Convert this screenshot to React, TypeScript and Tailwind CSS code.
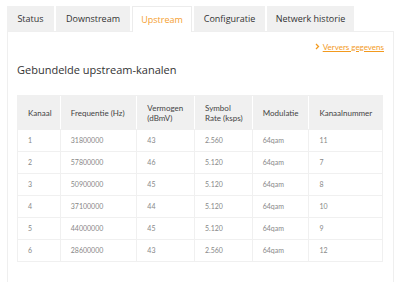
import React from "react";

const tabs = ["Status", "Downstream", "Upstream", "Configuratie", "Netwerk historie"];
const widths = ["w-[47px]", "w-[74px]", "w-[60px]", "w-[71px]", "w-[87px]"];

const rows = [
  ["1", "31800000", "43", "2.560", "64qam", "11"],
  ["2", "57800000", "46", "5.120", "64qam", "7"],
  ["3", "50900000", "45", "5.120", "64qam", "8"],
  ["4", "37100000", "44", "5.120", "64qam", "10"],
  ["5", "44000000", "45", "5.120", "64qam", "9"],
  ["6", "28600000", "43", "2.560", "64qam", "12"],
];

const colW = ["w-[43px]", "w-[77px]", "w-[58px]", "w-[58px]", "w-[57px]", "w-[73px]"];

export default function App() {
  return (
    <div className="w-[400px] h-[282px] bg-white overflow-hidden pt-[6px] pl-[7px]" style={{ fontFamily: "'Open Sans', sans-serif" }}>
      <div className="flex gap-[2px] h-[25px]">
        {tabs.map((t, i) => (
          <div
            key={t}
            className={
              "flex items-center justify-center text-[9px] " +
              widths[i] +
              (i === 2
                ? " bg-white text-[#f5a030] border border-[#ececec] border-b-0 relative z-10 h-[26px]"
                : " bg-[#f0f0f0] text-[#333]")
            }
          >
            {t}
          </div>
        ))}
      </div>
      <div className="w-[387px] h-[260px] border border-[#efefef] bg-white" style={{ fontFamily: "Lato, sans-serif" }}>
        <div className="flex justify-end pr-[9px] pt-[7px] h-[22px]">
          <span className="text-[#f39a1e] text-[8px] flex items-center gap-[3px]">
            <svg width="5" height="7" viewBox="0 0 5 7">
              <path d="M1 1 L3.5 3.5 L1 6" stroke="#f39a1e" strokeWidth="1.3" fill="none" />
            </svg>
            <span className="underline">Ververs gegevens</span>
          </span>
        </div>
        <div className="pl-[9px] pt-[8px] text-[11px] text-[#333] h-[41px]" style={{ fontFamily: "'Open Sans', sans-serif" }}>
          Gebundelde upstream-kanalen
        </div>
        <div className="ml-[9px] w-[366px] border border-[#f0f0f0]">
          <div className="flex bg-[#f0f0f0] h-[33px] text-[8px] text-[#444] leading-[10px]">
            {[
              "Kanaal",
              "Frequentie (Hz)",
              <>Vermogen<br />(dBmV)</>,
              <>Symbol<br />Rate (ksps)</>,
              "Modulatie",
              "Kanaalnummer",
            ].map((h, i) => (
              <div key={i} className={"flex items-center pl-[10px] border-r border-white last:border-r-0 " + colW[i]}>
                <span>{h}</span>
              </div>
            ))}
          </div>
          {rows.map((r, ri) => (
            <div key={ri} className="flex h-[22px] text-[7px] text-[#888] border-t border-[#f0f0f0]">
              {r.map((c, ci) => (
                <div key={ci} className={"flex items-center pl-[10px] border-r border-[#f0f0f0] last:border-r-0 " + colW[ci]}>
                  {c}
                </div>
              ))}
            </div>
          ))}
        </div>
      </div>
    </div>
  );
}
